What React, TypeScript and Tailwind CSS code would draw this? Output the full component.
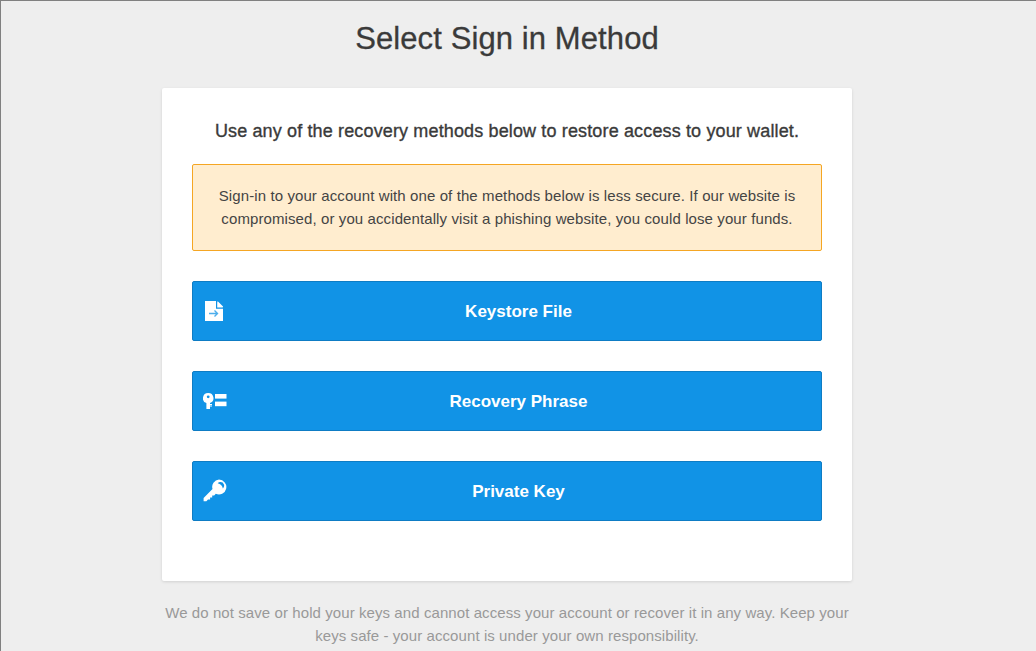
const font = "font-['Liberation_Sans',Arial,sans-serif]"

function FileIcon() {
  return (
    <svg width="20" height="22" viewBox="-1 0 20 22">
      <path d="M1 1h11.5L19.5 8v13H1z" fill="#fff" />
      <path d="M13.5 1l6 6h-6z" fill="#fff" />
      <path d="M12.6 0.6v7.6h7.4" fill="none" stroke="#1193e6" strokeWidth="1.2" />
      <path d="M5 13.5h8M10.5 10.5l3 3-3 3" fill="none" stroke="#1193e6" strokeWidth="1.4" opacity="0.75" />
    </svg>
  )
}

function PhraseIcon() {
  return (
    <svg width="24" height="20" viewBox="0 0 24 20">
      <path
        fillRule="evenodd"
        d="M5.2 2a5.2 5.2 0 0 1 1.8 10.1v.9h2v1.5H7v1h2V16H7v2H3.4v-5.9A5.2 5.2 0 0 1 5.2 2zm0 2.4a1.4 1.4 0 1 0 0 2.8 1.4 1.4 0 0 0 0-2.8z"
        fill="#fff"
      />
      <rect x="12" y="3" width="11.5" height="4.6" fill="#fff" />
      <rect x="12" y="10.6" width="11.5" height="4.6" fill="#fff" />
    </svg>
  )
}

function KeyIcon() {
  return (
    <svg width="24" height="24" viewBox="0 0 24 24">
      <path
        fillRule="evenodd"
        d="M16 .6a7.4 7.4 0 1 1-3.2 14.1l-1.6 1.7H9.2v2H7.1v2H5l-1.6 1.8H.6v-3.2l8.9-8.9A7.4 7.4 0 0 1 16 .6zm1.6 2.5a3.6 3.6 0 0 0-2.9 1.1 7 7 0 0 1 5.2 5.2 3.6 3.6 0 0 0-2.3-6.3z"
        fill="#fff"
      />
    </svg>
  )
}

function MethodButton({ label, icon }: { label: string; icon: React.ReactNode }) {
  return (
    <button className="relative flex h-[60px] w-full items-center justify-center rounded-[2px] border border-[#0e7cc4] bg-[#1193e6] pl-[23px] pt-[1px] text-[17px] font-bold text-white">
      <span className="absolute left-[10px] top-1/2 flex -translate-y-1/2 items-center">{icon}</span>
      {label}
    </button>
  )
}

export default function App() {
  return (
    <div className={`${font} h-[651px] overflow-hidden border-l border-t border-[#808080] bg-[#eeeeee] pr-[23px] text-[#3a3a3a]`}>
      <h1 className="pt-[21px] text-center text-[31px] leading-[33px] tracking-[0.1px] [-webkit-text-stroke:0.3px]">Select Sign in Method</h1>
      <div className="mx-auto mt-[33px] h-[493px] w-[690px] rounded-[2px] bg-white px-[30px] pt-[30px] shadow-[0_1px_3px_rgba(0,0,0,0.12)]">
        <p className="text-center text-[18px] leading-[26px] tracking-[0.14px] [-webkit-text-stroke:0.35px]">
          Use any of the recovery methods below to restore access to your wallet.
        </p>
        <div className="mt-[20px] rounded-[2px] border border-[#f5a623] bg-[#ffedcf] px-[20px] pb-[20px] pt-[19px] text-center text-[15px] leading-[23px] tracking-[0.1px] text-[#444444]">
          Sign-in to your account with one of the methods below is less secure. If our website is compromised, or you accidentally visit a phishing website, you could lose your funds.
        </div>
        <div className="mt-[30px] flex flex-col gap-[30px]">
          <MethodButton label="Keystore File" icon={<FileIcon />} />
          <MethodButton label="Recovery Phrase" icon={<PhraseIcon />} />
          <MethodButton label="Private Key" icon={<KeyIcon />} />
        </div>
      </div>
      <p className="mx-auto mt-[20px] w-[690px] text-center text-[15px] leading-[23px] tracking-[0.08px] text-[#999999]">
        We do not save or hold your keys and cannot access your account or recover it in any way. Keep your keys safe - your account is under your own responsibility.
      </p>
    </div>
  )
}
